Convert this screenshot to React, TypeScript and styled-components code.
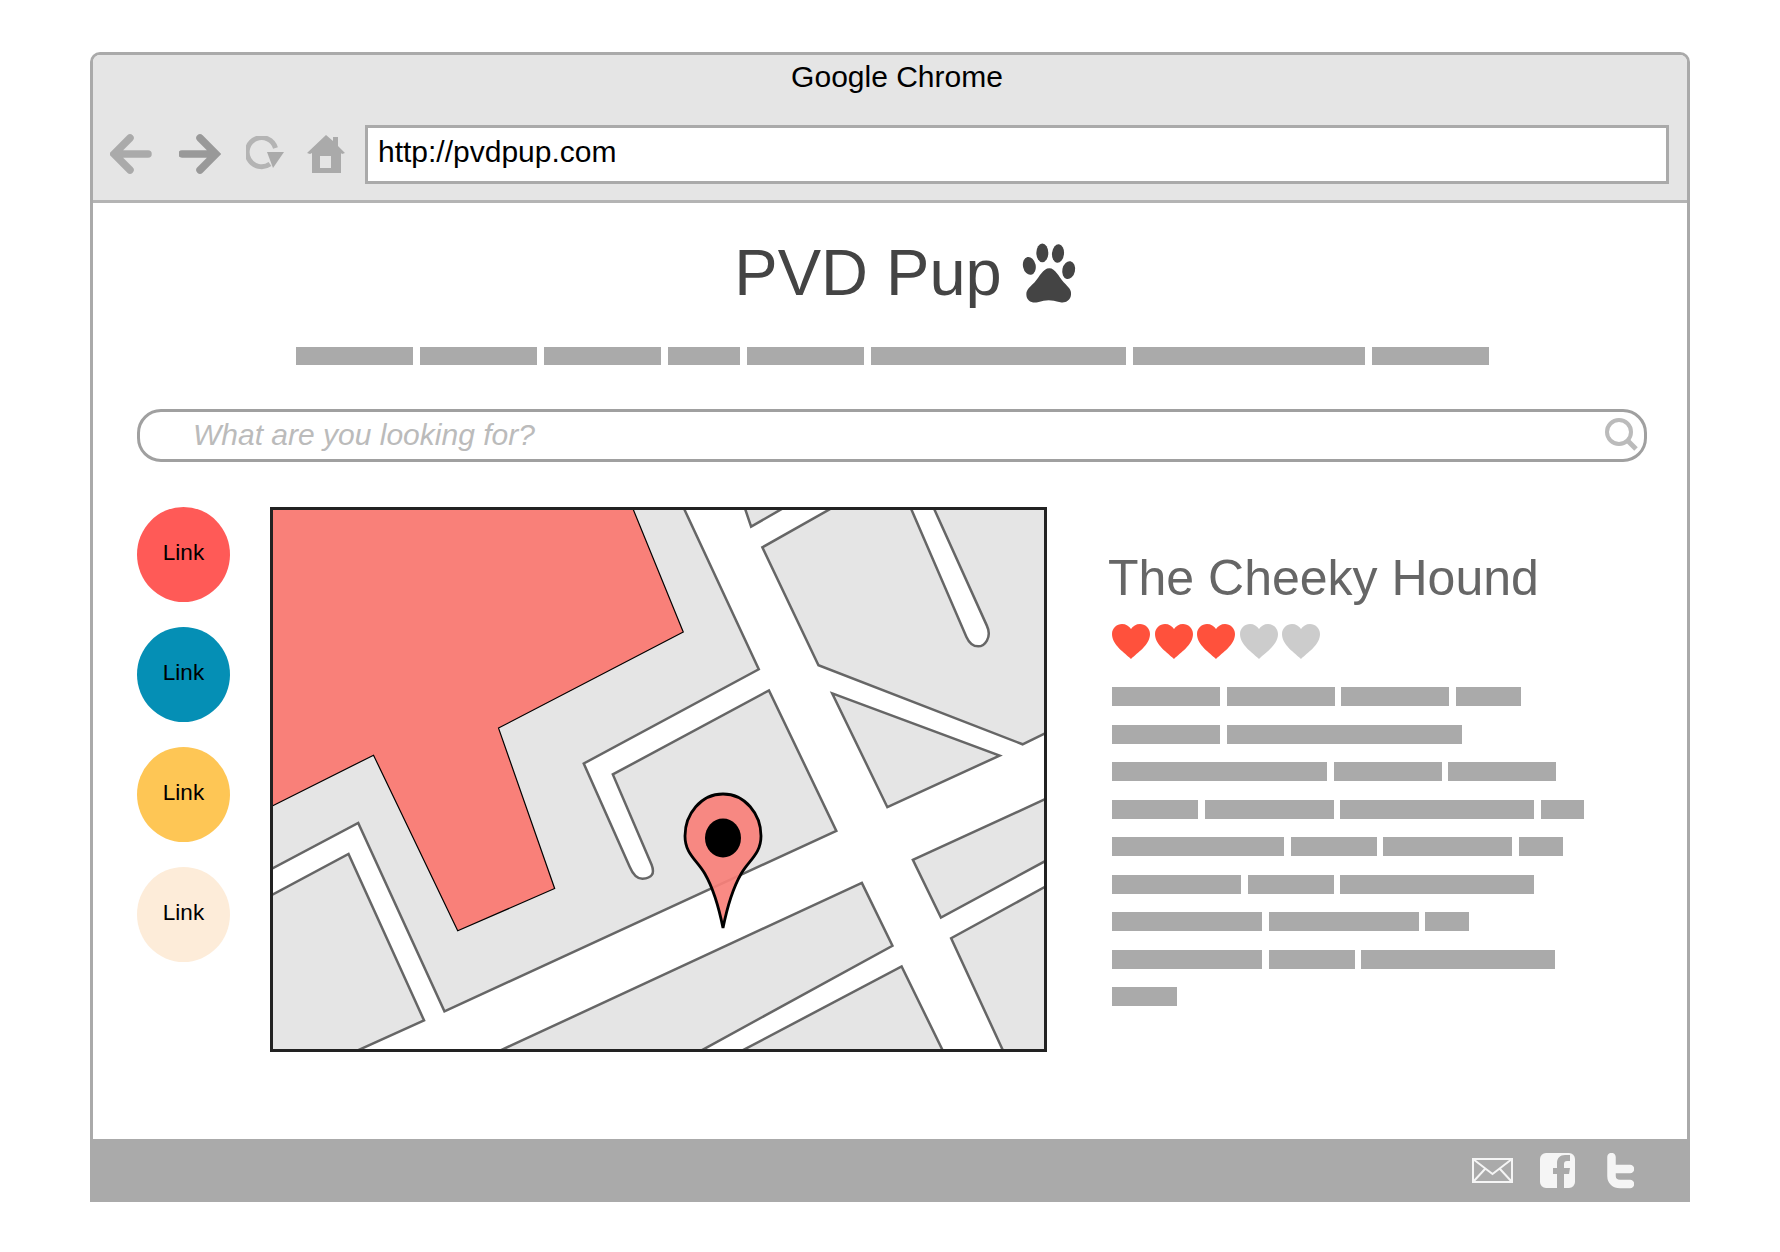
import styled, { createGlobalStyle } from "styled-components";

const GlobalStyle = createGlobalStyle`
  html, body {
    margin: 0;
    padding: 0;
    background: #fff;
    font-family: "Liberation Sans", Arial, sans-serif;
  }
`;

const Page = styled.div`
  width: 1780px;
  height: 1252px;
  padding: 52px 0 0 90px;
  box-sizing: border-box;
  overflow: hidden;
`;

const Browser = styled.div`
  width: 1600px;
  height: 1150px;
  box-sizing: border-box;
  display: flex;
  flex-direction: column;
  border: 3px solid #aaa;
  border-bottom: 0;
  border-radius: 10px 10px 0 0;
`;

const ChromeHead = styled.header`
  height: 148px;
  flex: none;
  box-sizing: border-box;
  background: #e5e5e5;
  border-bottom: 3px solid #b4b4b4;
  border-radius: 7px 7px 0 0;
`;

const WindowTitle = styled.div`
  height: 44px;
  line-height: 44px;
  text-align: center;
  padding-left: 14px;
  font-size: 30px;
  color: #000;
`;

const Toolbar = styled.div`
  display: flex;
  align-items: center;
  margin-top: 26px;
  padding: 0 18px 0 17px;
`;

const NavIcons = styled.div`
  width: 255px;
  height: 59px;
  flex: none;
  box-sizing: border-box;
  padding-bottom: 2px;
  display: flex;
  align-items: center;
`;

const NavIcon = styled.svg<{ $gap?: number }>`
  display: block;
  flex: none;
  margin-right: ${({ $gap }) => $gap ?? 0}px;
`;

const UrlBar = styled.div`
  flex: 1;
  height: 59px;
  box-sizing: border-box;
  background: #fff;
  border: 3px solid #aaa;
  padding-left: 10px;
  font-size: 30px;
  line-height: 48px;
  color: #000;
`;

const Main = styled.main`
  flex: 1;
  display: flex;
  flex-direction: column;
  padding: 0 40px 0 44px;
`;

const SiteHeading = styled.div`
  height: 144px;
  box-sizing: border-box;
  padding: 0 0 5px 27px;
  display: flex;
  justify-content: center;
  align-items: center;
  gap: 20px;
`;

const SiteTitle = styled.h1`
  margin: 0;
  font-size: 65px;
  font-weight: 400;
  color: #444;
`;

const SiteNav = styled.nav`
  display: flex;
  gap: 7px;
  padding-left: 159px;
`;

const Bar = styled.div<{ $w: number; $h?: number }>`
  width: ${({ $w }) => $w}px;
  height: ${({ $h }) => $h ?? 19}px;
  flex: none;
  background: #aaa;
`;

const SearchBox = styled.div`
  height: 53px;
  width: 1510px;
  margin-top: 44px;
  box-sizing: border-box;
  display: flex;
  align-items: center;
  justify-content: space-between;
  padding: 0 6px 2px 53px;
  border: 3px solid #a0a0a0;
  border-radius: 24px;
`;

const Placeholder = styled.span`
  font-size: 30px;
  font-style: italic;
  color: #bbb;
`;

const Content = styled.section`
  display: flex;
  margin-top: 45px;
`;

const LinkColumn = styled.div`
  width: 133px;
  flex: none;
  display: flex;
  flex-direction: column;
  gap: 25px;
`;

const LinkCircle = styled.a<{ $bg: string }>`
  width: 93px;
  height: 95px;
  box-sizing: border-box;
  padding-bottom: 3px;
  display: flex;
  align-items: center;
  justify-content: center;
  border-radius: 50%;
  background: ${({ $bg }) => $bg};
  font-size: 22.5px;
  color: #000;
`;

const MapFrame = styled.div`
  position: relative;
  width: 777px;
  height: 545px;
  flex: none;
  box-sizing: border-box;
  border: 3px solid #222;
  background: #fff;
`;

const MapSvg = styled.svg`
  display: block;
  width: 100%;
  height: 100%;
`;

const Pin = styled.svg`
  position: absolute;
  left: 410px;
  top: 282px;
`;

const Details = styled.article`
  margin-left: 61px;
  padding-top: 42px;
`;

const PlaceName = styled.h2`
  margin: 0;
  font-size: 50px;
  line-height: 58px;
  font-weight: 400;
  color: #666;
`;

const Hearts = styled.div`
  display: flex;
  gap: 4.5px;
  margin: 17px 0 0 4px;
`;

const TextLines = styled.div`
  display: flex;
  flex-direction: column;
  gap: 18.5px;
  margin: 28px 0 0 4px;
`;

const TextLine = styled.div`
  display: flex;
  gap: 6.5px;
`;

const Footer = styled.footer`
  height: 63px;
  flex: none;
  margin: 0 -3px;
  background: #aaa;
  display: flex;
  align-items: center;
  justify-content: flex-end;
  padding-right: 56px;
`;

const FooterIcon = styled.svg<{ $gap?: number }>`
  display: block;
  margin-left: ${({ $gap }) => $gap ?? 0}px;
`;

const navBars = [117, 117, 117, 72, 117, 255, 232, 117];

const textRows = [
  [108, 108, 108, 65],
  [108, 235],
  [215, 108, 108],
  [86, 129, 194, 43],
  [172, 86, 129, 44],
  [129, 86, 194],
  [150, 150, 44],
  [150, 86, 194],
  [65],
];

const links = ["#ff5a57", "#058fb5", "#fec655", "#fdecd9"];
const ratings = [true, true, true, false, false];

function Heart({ on }: { on: boolean }) {
  return (
    <svg width="38" height="35" viewBox="0 0 38 35">
      <path
        d="M19 35 C13 29 0 21 0 10 C0 4 5 0 10 0 C14 0 17 2 19 5 C21 2 24 0 28 0 C33 0 38 4 38 10 C38 21 25 29 19 35Z"
        fill={on ? "#ff513c" : "#ccc"}
      />
    </svg>
  );
}

// coordinates come from the zoomed crop, so the viewBox is not square to the pixels
function MapDrawing() {
  const block = { fill: "#e5e5e5", stroke: "#666", strokeWidth: 2.5, vectorEffect: "non-scaling-stroke" as const };
  return (
    <MapSvg viewBox="26 53 1511 1431" preserveAspectRatio="none">
      <path
        {...block}
        d="M20 45 L830 45 L978 476 L635 726 L725 1000 Q735 1032 750 1032 Q778 1030 768 995 L692 755 L998 532 L1130 905 L362 1384 L193 884 L20 1008Z"
      />
      <path {...block} d="M20 1078 L174 966 L322 1408 L185 1492 L20 1492Z" />
      <path {...block} d="M950 45 L963 97 L1030 45Z" />
      <path
        {...block}
        d="M1125 45 L985 152 L1095 465 L1495 675 L1545 642 L1545 45 L1320 45 L1425 360 C1436 392 1420 415 1408 415 C1396 415 1390 405 1385 390 L1275 45Z"
      />
      <path {...block} d="M1122 540 L1450 705 L1230 842Z" />
      <path {...block} d="M1545 817 L1280 982 L1335 1135 L1545 981Z" />
      <path {...block} d="M1545 1049 L1355 1190 L1458 1492 L1545 1492Z" />
      <path {...block} d="M1180 1043 L1240 1210 L860 1492 L465 1492Z" />
      <path {...block} d="M1258 1265 L1340 1492 L940 1492Z" />
      <path
        d="M20 45 L730 45 L830 377 L468 632 L578 1058 L388 1170 L223 704 L20 842Z"
        fill="#f98079"
        stroke="#000"
        strokeWidth="1.2"
        vectorEffect="non-scaling-stroke"
      />
    </MapSvg>
  );
}

function App() {
  return (
    <Page>
      <GlobalStyle />
      <Browser>
        <ChromeHead>
          <WindowTitle>Google Chrome</WindowTitle>
          <Toolbar>
            <NavIcons>
              <NavIcon width="42" height="40" viewBox="0 0 42 40" $gap={27}>
                <path d="M20 4 L4 20 L20 36 M5 20 H38" fill="none" stroke="#aaa" strokeWidth="7.5" strokeLinecap="round" strokeLinejoin="miter" />
              </NavIcon>
              <NavIcon width="42" height="40" viewBox="0 0 42 40" $gap={25}>
                <path d="M21 4 L37 20 L21 36 M36 20 H3" fill="none" stroke="#999" strokeWidth="7.5" strokeLinecap="round" strokeLinejoin="miter" />
              </NavIcon>
              <NavIcon width="40" height="36" viewBox="0 0 40 36" $gap={20}>
                <path d="M29.500 12 A14.500 14.500 0 1 0 24 28" fill="none" stroke="#b4b4b4" strokeWidth="5" />
                <path d="M21 16 H38 L27 32Z" fill="#aaa" />
              </NavIcon>
              <NavIcon width="40" height="38" viewBox="0 0 40 38">
                <path
                  fillRule="evenodd"
                  fill="#aaa"
                  d="M20 0 L27 6 V2 H32 V11 L39 18 L36 19 L35 18 V38 H6 V18 L4 19 L1 18Z M14 21 V33 H25 V21Z"
                />
              </NavIcon>
            </NavIcons>
            <UrlBar>http://pvdpup.com</UrlBar>
          </Toolbar>
        </ChromeHead>
        <Main>
          <SiteHeading>
            <SiteTitle>PVD Pup</SiteTitle>
            <svg width="55" height="62" viewBox="965 62 165 185">
              <g fill="#444">
                <ellipse cx="987" cy="133" rx="19" ry="27" transform="rotate(-12 987 133)" />
                <ellipse cx="1026" cy="94" rx="18" ry="28" />
                <ellipse cx="1073" cy="96" rx="18" ry="28" transform="rotate(6 1073 96)" />
                <ellipse cx="1105" cy="146" rx="19" ry="27" transform="rotate(12 1105 146)" />
                <path d="M1047 140 C1065 140 1075 165 1090 182 C1105 197 1114 205 1112 220 C1110 240 1092 245 1080 242 C1065 238 1055 236 1045 236 C1035 236 1025 238 1012 242 C995 246 978 238 978 218 C978 203 990 195 1003 182 C1018 165 1028 140 1047 140Z" />
              </g>
            </svg>
          </SiteHeading>
          <SiteNav>
            {navBars.map((w, i) => (
              <Bar key={i} $w={w} $h={18} />
            ))}
          </SiteNav>
          <SearchBox>
            <Placeholder>What are you looking for?</Placeholder>
            <svg width="33" height="33" viewBox="0 0 33 33">
              <circle cx="14" cy="14" r="12" fill="none" stroke="#bbb" strokeWidth="4" />
              <path d="M23 23 L31 31" stroke="#bbb" strokeWidth="5" />
            </svg>
          </SearchBox>
          <Content>
            <LinkColumn>
              {links.map((c) => (
                <LinkCircle key={c} $bg={c}>Link</LinkCircle>
              ))}
            </LinkColumn>
            <MapFrame>
              <MapDrawing />
              <Pin width="80" height="140" viewBox="0 0 80 140">
                <path
                  d="M40 2 C62 2 78 22 78 44 C78 62 66 68 58 82 C50 96 44 116 40 136 C36 116 30 96 22 82 C14 68 2 62 2 44 C2 22 18 2 40 2Z"
                  fill="#f98079"
                  fillOpacity="0.92"
                  stroke="#000"
                  strokeWidth="2.8"
                />
                <ellipse cx="40" cy="46" rx="18" ry="19.5" fill="#000" />
              </Pin>
            </MapFrame>
            <Details>
              <PlaceName>The Cheeky Hound</PlaceName>
              <Hearts>
                {ratings.map((on, i) => (
                  <Heart key={i} on={on} />
                ))}
              </Hearts>
              <TextLines>
                {textRows.map((row, i) => (
                  <TextLine key={i}>
                    {row.map((w, j) => (
                      <Bar key={j} $w={w} />
                    ))}
                  </TextLine>
                ))}
              </TextLines>
            </Details>
          </Content>
        </Main>
        <Footer>
          <FooterIcon width="41" height="25" viewBox="0 0 41 25">
            <g fill="none" stroke="#f5f5f5" strokeWidth="2">
              <rect x="1" y="1" width="39" height="23" />
              <path d="M1 1 L20.5 16 L40 1 M1 24 L13 11 M40 24 L28 11" />
            </g>
          </FooterIcon>
          <FooterIcon width="35" height="35" viewBox="0 0 35 35" $gap={27}>
            <path
              fill="#f5f5f5"
              d="M6 0 H29 A6 6 0 0 1 35 6 V29 A6 6 0 0 1 29 35 H24 V21 H29 L30 15 H24 V11 C24 9 25 8 27 8 H30 V2 H25 C20 2 17 5 17 10 V15 H13 V21 H17 V35 H6 A6 6 0 0 1 0 29 V6 A6 6 0 0 1 6 0Z"
            />
          </FooterIcon>
          <FooterIcon width="27" height="36" viewBox="0 0 27 36" $gap={32}>
            <path
              d="M4.500 4 V23 C4.500 28 8 31 13 31 H23 M4.500 16 H23"
              fill="none"
              stroke="#f5f5f5"
              strokeWidth="8.500"
              strokeLinecap="round"
            />
          </FooterIcon>
        </Footer>
      </Browser>
    </Page>
  );
}

export default App;
